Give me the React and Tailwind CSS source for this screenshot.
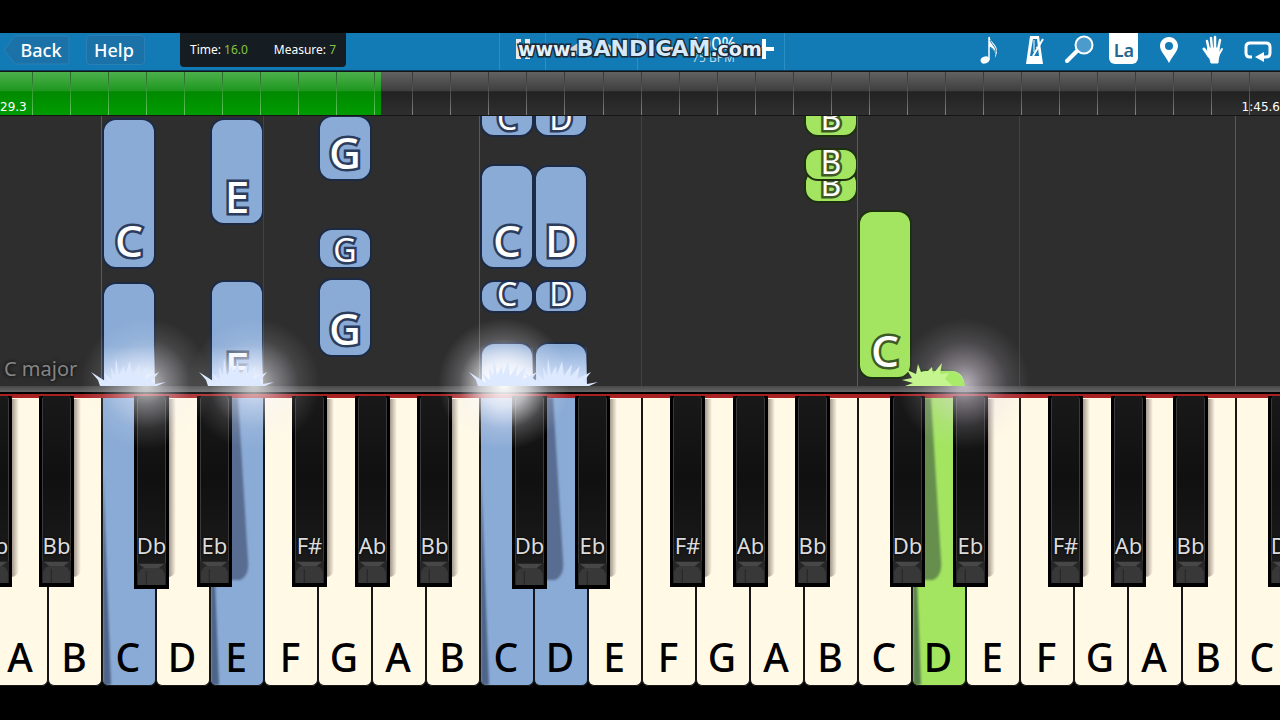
// App.jsx
import React from 'react';
import clsx from 'clsx';

const FONT = "font-['Noto_Sans','Open_Sans',sans-serif]";

// 25 white keys, the first one sits mostly off the left edge
const whiteKeys = 'G A B C D E F G A B C D E F G A B C D E F G A B C'.split(' ');

// left edge of the black key, counted from the white key below it
const blackKeys = {
  A: { label: 'Bb', place: 'left-[45px]' },
  C: { label: 'Db', place: 'left-[32px]' },
  D: { label: 'Eb', place: 'left-[41px]' },
  F: { label: 'F#', place: 'left-[28px]' },
  G: { label: 'Ab', place: 'left-[37px]' },
};

const pressed = {
  3: { color: 'blue', glow: '-left-[22px]' },
  5: { color: 'blue', glow: '-left-[22px]' },
  10: { color: 'blue', glow: '-left-[42px]', strong: true },
  11: { color: 'blue' },
  18: { color: 'green', glow: '-left-[14px]' },
};

// bottom = distance from the hit line
const notes = [
  { lane: 3, bottom: 117, height: 151, label: 'C' },
  { lane: 3, bottom: -40, height: 144 },
  { lane: 5, bottom: 161, height: 107, label: 'E' },
  { lane: 5, bottom: -10, height: 116, label: 'E' },
  { lane: 7, bottom: 205, height: 66, label: 'G' },
  { lane: 7, bottom: 117, height: 41, label: 'G', small: true },
  { lane: 7, bottom: 29, height: 79, label: 'G' },
  { lane: 10, bottom: 249, height: 34, label: 'C', small: true },
  { lane: 10, bottom: 117, height: 105, label: 'C' },
  { lane: 10, bottom: 73, height: 33, label: 'C', small: true },
  { lane: 10, bottom: -40, height: 84 },
  { lane: 11, bottom: 249, height: 34, label: 'D', small: true },
  { lane: 11, bottom: 117, height: 104, label: 'D' },
  { lane: 11, bottom: 73, height: 33, label: 'D', small: true },
  { lane: 11, bottom: -40, height: 84 },
  { lane: 16, bottom: 249, height: 34, label: 'B', small: true },
  { lane: 16, bottom: 183, height: 34, label: 'B', small: true },
  { lane: 16, bottom: 205, height: 33, label: 'B', small: true },
  { lane: 17, bottom: 7, height: 169, label: 'C' },
  { lane: 18, bottom: -40, height: 57 },
];

const Note = ({ note }) => {
  const green = note.lane > 13;
  return (
    <div
      className={clsx(
        'absolute inset-x-0 flex items-end justify-center overflow-hidden rounded-[14px] border-2',
        green ? 'border-[#1d3010] bg-[#a3e561]' : 'border-[#1c2a45] bg-[#8aabd6]'
      )}
      style={{ bottom: note.bottom, height: note.height }}
    >
      {note.label && (
        <span
          className={clsx(
            'text-white [paint-order:stroke_fill]',
            note.small
              ? 'pb-[2px] text-[32px] leading-[30px]'
              : 'pb-[6px] text-[44px] font-medium leading-[42px]',
            green
              ? '[-webkit-text-stroke:5px_#3d5a26]'
              : '[-webkit-text-stroke:5px_#2c3c5c]'
          )}
        >
          {note.label}
        </span>
      )}
    </div>
  );
};

const Spark = ({ color, glow, strong }) => (
  <>
    {color === 'blue' && (
      <div
        className={clsx(
          'pointer-events-none absolute left-[2px] right-px -top-[52px] z-20 h-[40px] bg-gradient-to-t to-transparent',
          strong ? 'from-white' : 'from-[#dce9ff]'
        )}
      />
    )}
    {glow && (
      <div
        className={clsx(
          'pointer-events-none absolute -top-[80px] z-20 h-[132px] w-[132px]',
          glow,
          color === 'green' &&
            'bg-[radial-gradient(closest-side,rgba(235,225,240,0.75),rgba(225,215,230,0.45)_30%,rgba(220,210,225,0.15)_65%,transparent)]',
          color === 'blue' &&
            !strong &&
            'bg-[radial-gradient(closest-side,rgba(255,255,255,0.75),rgba(245,245,255,0.42)_32%,rgba(235,235,245,0.12)_68%,transparent)]',
          strong &&
            'bg-[radial-gradient(closest-side,rgba(255,255,255,1),rgba(250,250,255,0.72)_35%,rgba(240,235,245,0.22)_68%,transparent)]'
        )}
      />
    )}
    <svg
      viewBox="0 0 76 34"
      className={clsx(
        'pointer-events-none absolute -top-[46px] z-20 h-[34px] w-[76px]',
        color === 'green' ? '-left-[11px] text-[#c4f58f]' : '-left-[11px] text-[#dce9ff]'
      )}
      fill="currentColor"
      aria-hidden="true"
    >
      {color === 'green' ? (
        <>
          <path d="M11 34 Q20 19 34 19 H50 Q62 21 64 34 Z" fill="#a9ea6a" />
          <path d="M4 34 L12 31 L1 28 L11 26 L6 18 L15 22 L17 12 L20 20 L27 19 L31 15 L32 22 L41 11 L39 22 L48 21 L44 27 L52 34 Z" />
        </>
      ) : (
        <path d="M9 34 L7 28 L0 20 L11 27 L17 31 L13 21 L21 28 L20 15 L24 24 L25 6 L28 23 L33 14 L34 23 L39 9 L41 24 L49 12 L47 25 L57 14 L54 27 L68 20 L61 29 L64 32 L75 30 L66 34 Z" />
      )}
    </svg>
  </>
);

const BlackKey = ({ label, place, nextPressed, lowered }) => (
  <div className={clsx('absolute -top-[2px] z-10 w-[35px]', place, lowered ? 'h-[193px]' : 'h-[191px]')}>
    {nextPressed ? (
      <svg viewBox="0 0 22 190" className="absolute left-[33px] top-0 h-[188px] w-[22px] blur-[1px]" aria-hidden="true">
        <path d="M0 2 H8 L18 165 Q20 182 10 186 H0 Z" fill="rgba(20,25,50,0.42)" />
      </svg>
    ) : (
      <div className="absolute left-[34px] top-[3px] h-[178px] w-[8px] rounded-br-lg bg-gradient-to-r from-[#7d6f66]/80 to-transparent" />
    )}
    <button
      type="button"
      className="relative flex h-full w-full flex-col items-center justify-end bg-black px-[3px] pb-[4px]"
    >
      <span className="w-full flex-1 rounded-t-sm border-x border-[#3a3a3a] bg-gradient-to-b from-[#191919] via-[#101010] to-[#1b1b1b]" />
      <span
        className={clsx(
          'absolute text-[22px] leading-[28px] text-[#dcdcdc] [text-shadow:0_0_3px_#000]',
          lowered ? 'bottom-[30px]' : 'bottom-[28px]'
        )}
      >
        {label}
      </span>
      <svg viewBox="0 0 28 22" className="h-[22px] w-full" preserveAspectRatio="none" aria-hidden="true">
        <rect width="28" height="22" fill="#262626" />
        <path d="M2 1 H26 L21 5 H7 Z" fill="#474747" />
        <path d="M1 22 V11 Q3 5 8 5 H20 Q25 5 27 11 V22 Z" fill="#383838" />
        <path d="M9 8 V22" stroke="#272727" />
      </svg>
    </button>
  </div>
);

const WhiteKey = ({ name, index }) => {
  const hit = pressed[index];
  const black = blackKeys[name];
  return (
    <div className="relative min-w-0 flex-1">
      <button
        type="button"
        className={clsx(
          'relative flex h-full w-full items-end justify-center overflow-hidden rounded-b-md border-x border-b border-[#161616] pr-[2px] text-[39px] font-medium leading-[56px] text-black',
          !hit && 'bg-[#fff9e6]',
          hit?.color === 'blue' && 'bg-[#8aabd6]',
          hit?.color === 'green' && 'bg-[#a3e561]'
        )}
      >
        {hit && !pressed[index - 1] && (
          <svg viewBox="0 0 12 210" className="absolute bottom-0 left-0 h-[210px] w-[12px] blur-[1px]" aria-hidden="true">
            <path d="M0 0 L8 210 H0 Z" fill="rgba(20,30,60,0.5)" />
          </svg>
        )}
        {name}
      </button>
      {black && (
        <BlackKey {...black} nextPressed={Boolean(pressed[index + 1])} lowered={hit?.color === 'blue'} />
      )}
      {hit && <Spark {...hit} />}
    </div>
  );
};

const Toolbar = () => (
  <header className="grid h-[38px] grid-cols-[1fr_286px_1fr] border-b border-[#0a3d5c] bg-[#127ab5] pl-1 text-white">
    <div className="flex items-start">
      <button type="button" className="relative mt-[2px] h-[30px] w-[66px] pl-[8px] text-[18px] font-medium leading-[28px]">
        <svg viewBox="0 0 66 30" className="absolute inset-0 h-full w-full" aria-hidden="true">
          <path d="M0 15 L11 1 H63 Q65 1 65 3 V27 Q65 29 63 29 H11 Z" fill="#1a72a8" stroke="#2a80b5" />
        </svg>
        <span className="relative">Back</span>
      </button>
      <button
        type="button"
        className="ml-[16px] mt-[2px] h-[30px] w-[59px] rounded-sm border border-[#2a80b5] bg-[#1a72a8] pr-[3px] text-[18px] font-medium leading-[26px]"
      >
        Help
      </button>
      <div className="ml-[35px] flex h-[34px] w-[166px] items-center justify-between rounded-b bg-[#151c22] px-[10px] text-[12px]">
        <span>
          Time: <span className="text-[#86c440]">16.0</span>
        </span>
        <span>
          Measure: <span className="text-[#86c440]">7</span>
        </span>
      </div>
    </div>

    <div className="relative flex border-x border-[#2b8fc6]">
      <button type="button" aria-label="Bookmark" className="flex w-[46px] items-center justify-center border-r border-[#2b8fc6] pb-[6px]">
        <svg viewBox="0 0 16 20" className="h-[20px] w-[16px]" fill="#e8e8e8" aria-hidden="true">
          <path d="M1 0 H6 V3 H4 V17 H6 V20 H1 Z M10 0 H15 V20 H10 V13 H7 V9 H10 Z" />
        </svg>
      </button>
      <button type="button" aria-label="Rewind" className="flex w-[92px] items-center justify-center border-r border-[#2b8fc6] pb-[6px]">
        <svg viewBox="0 0 50 14" className="h-[14px] w-[50px]" fill="#d5d5d5" aria-hidden="true">
          <path d="M11 1 V13 L2 7 Z M34 2 H38 V12 H34 Z M41 2 L49 7 L41 12 Z" />
        </svg>
      </button>
      <div className="flex flex-1 items-center justify-between pb-[6px] pl-[15px] pr-[10px]">
        <button type="button" aria-label="Slower" className="h-[4px] w-[20px] bg-[#e2e2e2]" />
        <div className="text-center">
          <div className="text-[18px] leading-[18px]">100%</div>
          <div className="text-[12px] leading-[12px] text-[#b9d9ec]">75 BPM</div>
        </div>
        <button type="button" aria-label="Faster">
          <svg viewBox="0 0 20 20" className="h-[20px] w-[20px]" stroke="#fff" strokeWidth="4" aria-hidden="true">
            <path d="M10 0 V20 M0 10 H20" />
          </svg>
        </button>
      </div>
      {/* recorder watermark */}
      <div className="pointer-events-none absolute left-[18px] top-0 whitespace-nowrap font-['DejaVu_Sans',sans-serif] text-[19px] font-bold leading-[32px] text-[#e4f1fd] [-webkit-text-stroke:3px_#1c2833] [paint-order:stroke_fill]">
        www.<span className="text-[22px] text-[#d3e9fc]">BANDICAM</span>.com
      </div>
    </div>

    <div className="flex justify-end">
      <div className="grid w-[312px] grid-cols-7 justify-items-center">
        <button type="button" aria-label="Notation" className="pb-[4px]">
          <svg viewBox="0 0 20 30" className="h-[30px] w-[20px]" aria-hidden="true">
            <ellipse cx="5" cy="25" rx="4.5" ry="3.5" transform="rotate(-20 5 25)" fill="#fff" />
            <path d="M9 25 V2" stroke="#fff" strokeWidth="1.5" />
            <path d="M9 1 C10 7 17 9 17 16 C17 19 16 20 15 23 C16 16 13 14 9 12 Z" fill="#fff" />
            <path d="M10 5 C12 10 16 12 16 17 M10 12 C13 14 16 16 15 20" stroke="#127ab5" fill="none" />
          </svg>
        </button>
        <button type="button" aria-label="Metronome" className="pb-[4px]">
          <svg viewBox="0 0 20 30" className="h-[30px] w-[20px]" aria-hidden="true">
            <path d="M5 1 H14 L18 29 H1 Z" fill="#fff" />
            <path d="M8 4 H12 L14 21 H5 Z" fill="#127ab5" />
            <path d="M8 21 L18 4" stroke="#fff" strokeWidth="2" />
            <path d="M9 5 V17 M11 12 L14 14" stroke="#fff" strokeWidth="1" />
          </svg>
        </button>
        <button type="button" aria-label="Zoom" className="pb-[4px]">
          <svg viewBox="0 0 30 30" className="h-[30px] w-[30px]" aria-hidden="true">
            <path d="M3 26 L13 16" stroke="#fff" strokeWidth="4" strokeLinecap="round" />
            <circle cx="20" cy="10" r="8.5" fill="#4b9ccc" stroke="#fff" strokeWidth="2" />
          </svg>
        </button>
        <button
          type="button"
          className="h-[31px] w-[29px] rounded-b-md bg-white pt-[3px] text-[18px] font-semibold leading-[28px] text-[#27668f]"
        >
          La
        </button>
        <button type="button" aria-label="Marker" className="pb-[4px]">
          <svg viewBox="0 0 20 28" className="h-[28px] w-[20px]" aria-hidden="true">
            <path d="M10 1 C5 1 1 5 1 10 C1 15 6 19 10 27 C14 19 19 15 19 10 C19 5 15 1 10 1 Z" fill="#fff" />
            <circle cx="10" cy="10" r="4" fill="#127ab5" />
          </svg>
        </button>
        <button type="button" aria-label="Hands" className="pb-[4px]">
          <svg viewBox="0 0 22 30" className="h-[30px] w-[22px]" fill="#fff" stroke="#fff" strokeLinecap="round" aria-hidden="true">
            <path d="M6 13 H17 V21 Q16 25 16 28 H9 Q9 24 5 20 Z" />
            <path d="M7 15 L5 6 M10 14 L9 3 M13 14 L13 2 M16 15 L18 5" strokeWidth="2.5" fill="none" />
            <path d="M7 21 L2 14" strokeWidth="3" />
            <path d="M16 21 L20 14" strokeWidth="2" />
          </svg>
        </button>
        <button type="button" aria-label="Loop" className="pb-[2px]">
          <svg viewBox="0 0 28 22" className="h-[22px] w-[28px]" aria-hidden="true">
            <path
              d="M8 17 H6 Q2 17 2 13 V7 Q2 3 6 3 H22 Q26 3 26 7 V13 Q26 17 22 17 H20"
              fill="none"
              stroke="#fff"
              strokeWidth="3"
            />
            <path d="M20 12 V22 L11 17 Z" fill="#fff" />
          </svg>
        </button>
      </div>
    </div>
  </header>
);

const Timeline = () => (
  <div className="relative h-[45px] overflow-hidden border-y border-[#151515] bg-[linear-gradient(#626262,#3f3f3f_43%,#222_46%,#2f2f2f)] font-['DejaVu_Sans',sans-serif] text-[12px] leading-[16px] text-white">
    <div
      className="absolute inset-y-0 left-0 bg-[linear-gradient(#4cb04c,#1f981f_43%,#008a00_46%,#009b00)]"
      style={{ width: '29.8%' }}
    />
    <div className="relative -ml-[5px] -mr-[8px] flex h-full">
      {Array.from({ length: 34 }, (_, i) => (
        <div key={i} className="relative flex-1">
          <div className="absolute inset-y-0 right-0 w-px bg-gradient-to-b from-black/40 via-white/20 to-white/40" />
        </div>
      ))}
    </div>
    <span className="absolute bottom-0 left-0">29.3</span>
    <span className="absolute bottom-0 right-0">1:45.6</span>
  </div>
);

const NoteRoll = () => (
  <div className="relative min-h-0 flex-1 overflow-hidden bg-[#2e2e2e]">
    <div className="-ml-[60px] -mr-[10px] flex h-full">
      {whiteKeys.map((name, lane) => (
        <div
          key={lane}
          className={clsx(
            'relative flex-1',
            name === 'C' && 'shadow-[-1px_0_0_#5a5a5a]',
            name === 'F' && 'shadow-[-1px_0_0_#424242]'
          )}
        >
          {notes
            .filter((note) => note.lane === lane)
            .map((note, i) => (
              <Note key={i} note={note} />
            ))}
        </div>
      ))}
    </div>
    <span className="absolute bottom-[4px] left-[4px] text-[20px] leading-[26px] text-[#858585] [text-shadow:0_0_4px_#000]">
      C major
    </span>
  </div>
);

const App = () => {
  return (
    <div className={clsx('flex h-screen min-h-[560px] flex-col bg-black pb-[34px] pt-[33px]', FONT)}>
      <Toolbar />
      <Timeline />
      <main className="flex min-h-0 flex-1 flex-col overflow-hidden">
        <NoteRoll />
        <div className="h-[8px] border-b-2 border-black bg-gradient-to-b from-[#484848] to-[#666]" />
        <div className="h-[4px] bg-[#a82224]" />
        <div className="-ml-[60px] -mr-[10px] flex h-[288px] bg-black">
          {whiteKeys.map((name, i) => (
            <WhiteKey key={i} name={name} index={i} />
          ))}
        </div>
      </main>
    </div>
  );
};

export default App;
